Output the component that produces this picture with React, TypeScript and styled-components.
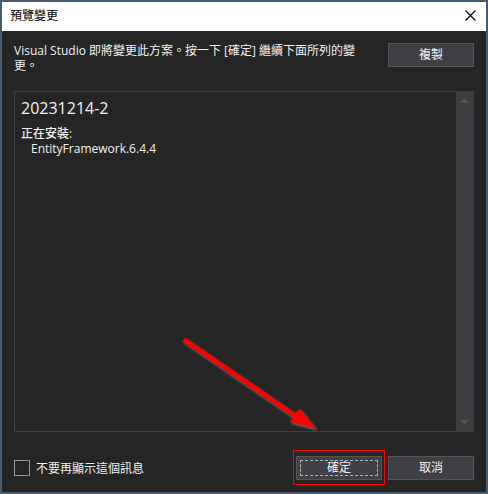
import React from "react";
import styled, { createGlobalStyle } from "styled-components";

const GlobalStyle = createGlobalStyle`
  *, *::before, *::after { box-sizing: border-box; }
  body {
    margin: 0;
    font-family: "Open Sans", "Noto Sans CJK TC", sans-serif;
    font-size: 12px;
    line-height: 15px;
    color: #f1f1f1;
    background: #252526;
  }
  h1, h2, h3, p, ul { margin: 0; padding: 0; font: inherit; }
`;

const Dialog = styled.main`
  position: relative;
  display: flex;
  flex-direction: column;
  min-height: 100vh;
  border: 2px solid #465b6e;
  background: #252526;
`;

const TitleBar = styled.header`
  display: flex;
  align-items: center;
  justify-content: space-between;
  height: 29px;
  padding: 0 10px 2px 8px;
  color: #000;
  background: #fff;
`;

const Title = styled.h1``;

const CloseButton = styled.button`
  display: flex;
  padding: 0;
  border: 0;
  color: #000;
  background: none;
`;

const Content = styled.div`
  display: flex;
  flex: 1;
  flex-direction: column;
  padding: 12px;
`;

const Intro = styled.div`
  display: flex;
  align-items: flex-start;
  justify-content: space-between;
  gap: 24px;
`;

const Message = styled.p`
  flex: 1;
`;

const Button = styled.button<{ $focused?: boolean }>`
  flex: none;
  width: 86px;
  height: 24px;
  padding: 3px;
  border: 1px solid #555558;
  font: inherit;
  line-height: 14px;
  color: #f1f1f1;
  background: #3f3f46;

  span {
    display: block;
    border: 1px dashed ${(p) => (p.$focused ? "#b4b4b6" : "transparent")};
  }
`;

const Panel = styled.section`
  display: flex;
  flex: 1;
  margin: 18px 0 24px;
  border: 1px solid #3f3f46;
`;

const Changes = styled.div`
  flex: 1;
  padding: 6px;
`;

const ProjectName = styled.h2`
  margin-bottom: 8px;
  font-size: 16px;
  line-height: 20px;
`;

const Action = styled.h3`
  font-weight: 500;
`;

const Packages = styled.ul`
  padding-left: 10px;
  list-style: none;
`;

const ScrollTrack = styled.div`
  display: flex;
  flex-direction: column;
  align-items: center;
  justify-content: space-between;
  width: 17px;
  padding: 6px 0;
  background: #3e3e42;
`;

const Footer = styled.footer`
  display: flex;
  align-items: center;
  gap: 6px;
`;

const CheckLabel = styled.label`
  display: flex;
  flex: 1;
  align-items: center;
  gap: 6px;
`;

const Checkbox = styled.input`
  appearance: none;
  width: 16px;
  height: 16px;
  margin: 0;
  border: 1px solid #999;
  background: #252526;
`;

const Highlight = styled.div`
  position: relative;
  display: flex;

  &::after {
    content: "";
    position: absolute;
    inset: -6px -3px -5px;
    border: 1px solid #f00;
    pointer-events: none;
  }
`;

const Arrow = styled.svg`
  position: absolute;
  right: 164px;
  bottom: 56px;
  pointer-events: none;
`;

export default function App() {
  return (
    <>
      <GlobalStyle />
      <Dialog>
        <TitleBar>
          <Title>預覽變更</Title>
          <CloseButton aria-label="關閉">
            <svg width="11" height="11" viewBox="0 0 11 11" stroke="currentColor" strokeWidth="1.1">
              <path d="M.5.5l10 10M10.5.5l-10 10" />
            </svg>
          </CloseButton>
        </TitleBar>
        <Content>
          <Intro>
            <Message>Visual Studio 即將變更此方案。按一下 [確定] 繼續下面所列的變更。</Message>
            <Button><span>複製</span></Button>
          </Intro>
          <Panel>
            <Changes>
              <ProjectName>20231214-2</ProjectName>
              <Action>正在安裝:</Action>
              <Packages>
                <li>EntityFramework.6.4.4</li>
              </Packages>
            </Changes>
            <ScrollTrack aria-hidden="true">
              <svg width="9" height="5" viewBox="0 0 9 5" fill="#555558">
                <path d="M4.5 0L9 5H0z" />
              </svg>
              <svg width="9" height="5" viewBox="0 0 9 5" fill="#555558">
                <path d="M0 0h9L4.5 5z" />
              </svg>
            </ScrollTrack>
          </Panel>
          <Footer>
            <CheckLabel>
              <Checkbox type="checkbox" />
              不要再顯示這個訊息
            </CheckLabel>
            <Highlight>
              <Button $focused><span>確定</span></Button>
            </Highlight>
            <Button><span>取消</span></Button>
          </Footer>
        </Content>
        <Arrow width="142" height="100" viewBox="0 0 142 100" aria-hidden="true">
          <defs>
            <filter id="arrow-shadow" x="-10%" y="-10%" width="120%" height="120%" colorInterpolationFilters="sRGB">
              <feDropShadow dx="1.5" dy="1.5" stdDeviation="0.8" floodColor="#aaa" floodOpacity="0.6" />
            </filter>
          </defs>
          <path
            d="M5 1.8L2.4 5.4 112.6 81.2 110 86 136 93 119.3 72.4 115.4 77.2z"
            fill="#f00"
            filter="url(#arrow-shadow)"
          />
        </Arrow>
      </Dialog>
    </>
  );
}
